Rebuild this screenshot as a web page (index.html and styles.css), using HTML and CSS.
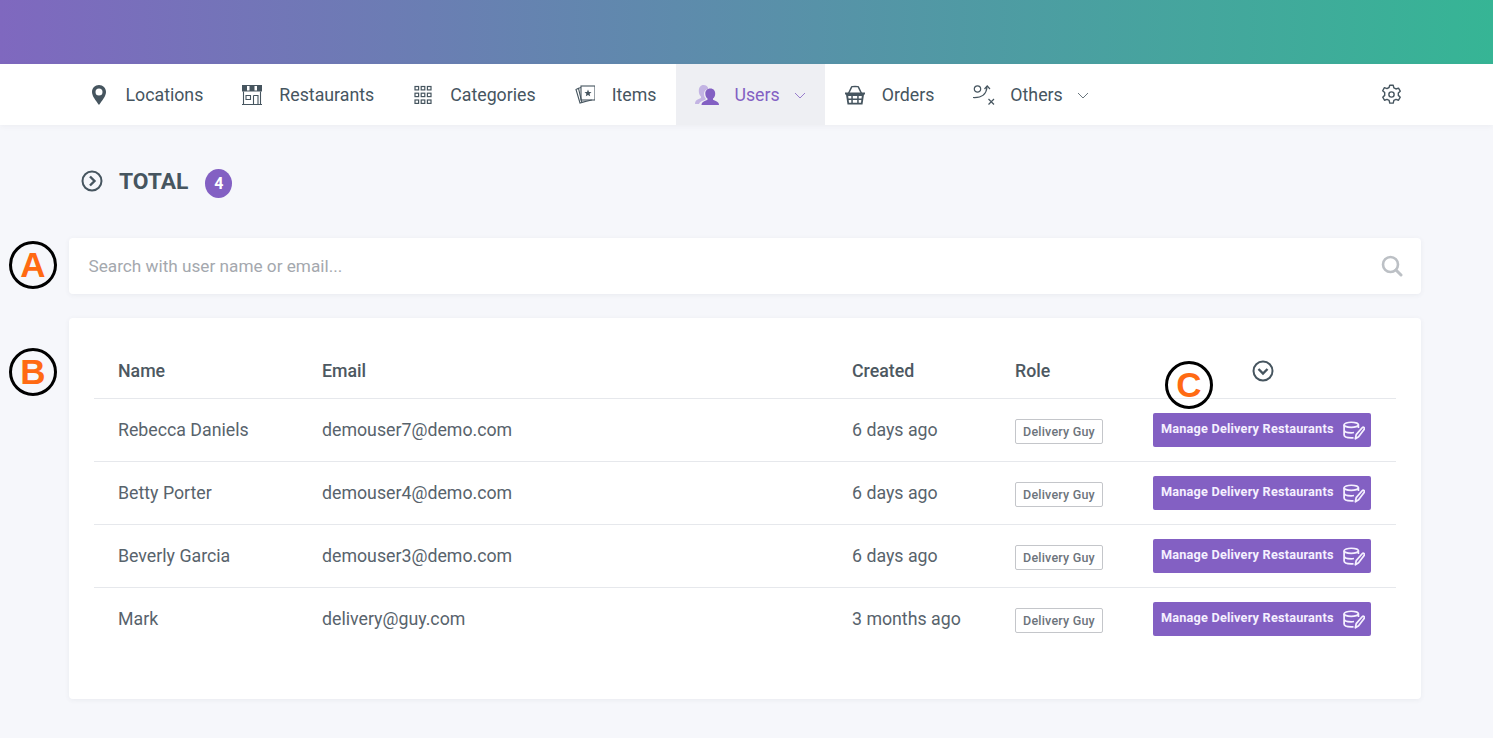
FILE: index.html
```html
<!DOCTYPE html>
<html lang="en">
<head>
<meta charset="utf-8">
<title>Users</title>
<link rel="stylesheet" href="styles.css">
</head>
<body>
<svg class="defs" width="0" height="0" aria-hidden="true">
  <symbol id="i-edit" viewBox="0 0 24 20">
    <ellipse cx="9" cy="3.800" rx="7.800" ry="2.800" fill="none" stroke="currentColor" stroke-width="1.900"/>
    <path d="M1.200 3.800V15c0 1.800 3.500 3 7.800 3h2.500M1.200 9.500c0 1.800 3.500 3 7.800 3 1 0 2-.1 3-.3M16.800 3.800v3.500" fill="none" stroke="currentColor" stroke-width="1.900"/>
    <path d="M13.500 19l.9-4.500 6.500-7.500c.7-.7 1.500-.7 2.100-.1s.6 1.400 0 2.100L17 16.800z" fill="none" stroke="currentColor" stroke-width="1.900" stroke-linejoin="round"/>
  </symbol>
</svg>

<header class="gradient-bar"></header>

<nav class="nav">
  <a class="nav-item">
    <svg class="nav-icon" viewBox="0 0 20 20"><path fill="#46555f" fill-rule="evenodd" d="M10 0C6 0 3 3.100 3 7c0 4.300 4.200 8.800 7 13 2.800-4.200 7-8.700 7-13 0-3.900-3-7-7-7zm0 3.500a3.500 3.500 0 1 1 0 7 3.500 3.500 0 0 1 0-7z"/></svg>
    <span>Locations</span>
  </a>
  <a class="nav-item">
    <svg class="nav-icon" viewBox="0 0 20 20"><path fill="#46555f" d="M0 0h20v6.500H0z"/><path fill="#fff" d="M5 1h2.500v4.500H5zM12.500 1H15v4.500h-2.500z"/><path fill="none" stroke="#46555f" stroke-width="1.100" d="M1.500 6.500V19M18.500 6.500V19M0 19.500h20M4 10.500h4.500v4H4zM11.500 10.500h4.500v9M11.500 10.500v9"/></svg>
    <span>Restaurants</span>
  </a>
  <a class="nav-item">
    <svg class="nav-icon" viewBox="0 0 20 20"><g fill="none" stroke="#46555f" stroke-width="1.200"><rect x="2" y="1.500" width="3.600" height="3.400"/><rect x="8.200" y="1.500" width="3.600" height="3.400"/><rect x="14.400" y="1.500" width="3.600" height="3.400"/><rect x="2" y="8.200" width="3.600" height="3.400"/><rect x="8.200" y="8.200" width="3.600" height="3.400"/><rect x="14.400" y="8.200" width="3.600" height="3.400"/><rect x="2" y="15" width="3.600" height="3.400"/><rect x="8.200" y="15" width="3.600" height="3.400"/><rect x="14.400" y="15" width="3.600" height="3.400"/></g></svg>
    <span>Categories</span>
  </a>
  <a class="nav-item">
    <svg class="nav-icon" viewBox="0 0 20 20"><g fill="none" stroke="#46555f" stroke-width="1.100"><rect x="6" y="1" width="14" height="14"/><path d="M6 2.500l-2.500.8 3.300 14 10-2.300M3.500 3.300L1 4.500l4 13.500 6.500-1.700"/></g><path fill="#46555f" d="M13 4.500l1 2.400 2.500.2-1.900 1.600.6 2.500-2.200-1.300-2.200 1.300.6-2.500-1.900-1.600 2.500-.2z"/></svg>
    <span>Items</span>
  </a>
  <a class="nav-item nav-item-active">
    <svg class="nav-icon" viewBox="0 0 24 20"><path fill="#c3b4e3" d="M8.500 0c2.600 0 4.500 1.600 4.800 4-2.600.2-4.300 2.200-4.300 5 0 1.700.6 3.300 1.700 4.400v1l-3.500 1.600c-1.600.7-2.700 1.600-3.200 3H0c0-2.500 1.100-4 3.200-4.800l2.800-1.200v-1.500C4.600 10.300 3.800 8.300 3.800 6 3.800 2.500 5.600 0 8.500 0z"/><path fill="#8360c3" d="M15.500 3.500c2.900 0 4.700 2.200 4.700 5.200 0 2-.8 3.800-2.200 4.900v1.200l3.300 1.500c1.800.8 2.700 2 2.700 3.700H6.500c0-1.700.9-2.900 2.700-3.700l3.300-1.500v-1.200c-1.400-1.100-2.200-2.900-2.200-4.900 0-3 1.800-5.200 5.200-5.200z"/></svg>
    <span>Users</span>
    <svg class="caret" viewBox="0 0 12 7"><path d="M1 1l5 5 5-5" fill="none" stroke="currentColor" stroke-width="1"/></svg>
  </a>
  <a class="nav-item">
    <svg class="nav-icon" viewBox="0 0 20 20"><path fill="none" stroke="#46555f" stroke-width="1.500" d="M3.500 8.500l3.300-6.800c.2-.4 6.200-.4 6.400 0l3.300 6.800"/><path fill="#46555f" fill-rule="evenodd" d="M0 7.500h20v2h-1l-1.500 10h-15L1 9.500H0zM3.200 11l.3 2.600h2.800V11zm4.600 0v2.600h4.400V11zm5.900 0v2.600h2.800l.3-2.600zM3.700 15.100l.3 2.700h2.300v-2.700zm4.100 0v2.700h4.400v-2.700zm5.900 0v2.700H16l.3-2.700z"/></svg>
    <span>Orders</span>
  </a>
  <a class="nav-item">
    <svg class="nav-icon nav-icon-wide" viewBox="0 0 22 20"><g fill="none" stroke="#46555f" stroke-width="1.200"><circle cx="4.500" cy="4" r="3.200"/><path d="M0 12.500c6 .3 13-1.500 14-10M11.500 4l2.700-3 2.800 3M15.500 14l5.500 5.500M21 14l-5.500 5.500"/></g></svg>
    <span>Others</span>
    <svg class="caret" viewBox="0 0 12 7"><path d="M1 1l5 5 5-5" fill="none" stroke="currentColor" stroke-width="1"/></svg>
  </a>
  <a class="nav-settings">
    <svg viewBox="0 0 24 24" width="21" height="21"><g fill="none" stroke="#46555f" stroke-width="1.600" stroke-linejoin="round"><circle cx="12" cy="12" r="3"/><path d="M10 1.500h4l.7 3 2.400 1.200 2.900-1 2 3.500-2.200 2.100v2.700l2.200 2.100-2 3.500-2.900-1-2.400 1.200-.7 3h-4l-.7-3-2.400-1.200-2.900 1-2-3.500 2.200-2.100V9.800L1.900 7.700l2-3.500 2.900 1 2.400-1.200z"/></g></svg>
  </a>
</nav>

<main class="page">
  <div class="page-title">
    <svg class="title-icon" viewBox="0 0 22 22"><circle cx="11" cy="11" r="9.500" fill="none" stroke="#46555f" stroke-width="2"/><path d="M9 6.500l4.500 4.500L9 15.500" fill="none" stroke="#46555f" stroke-width="2.400"/></svg>
    <h1>TOTAL</h1>
    <span class="count">4</span>
  </div>

  <div class="card search">
    <span class="search-text">Search with user name or email...</span>
    <svg class="search-icon" viewBox="0 0 22 22"><circle cx="9.500" cy="9.500" r="7.500" fill="none" stroke="#bcc0c5" stroke-width="2.600"/><path d="M15 15l5 5" stroke="#bcc0c5" stroke-width="3" stroke-linecap="round"/></svg>
  </div>

  <section class="card table-card">
    <table class="users">
      <colgroup>
        <col class="col-name"><col class="col-email"><col class="col-created"><col class="col-role"><col>
      </colgroup>
      <thead>
        <tr>
          <th>Name</th>
          <th>Email</th>
          <th>Created</th>
          <th>Role</th>
          <th class="th-toggle"><svg class="toggle-icon" viewBox="0 0 22 22"><circle cx="11" cy="11" r="9.500" fill="none" stroke="#46555f" stroke-width="2"/><path d="M6.500 9l4.500 4.500L15.500 9" fill="none" stroke="#46555f" stroke-width="2.400"/></svg></th>
        </tr>
      </thead>
      <tbody>
        <tr>
          <td>Rebecca Daniels</td><td>demouser7@demo.com</td><td>6 days ago</td>
          <td><span class="role">Delivery Guy</span></td>
          <td><a class="manage">Manage Delivery Restaurants<svg class="manage-icon"><use href="#i-edit"/></svg></a></td>
        </tr>
        <tr>
          <td>Betty Porter</td><td>demouser4@demo.com</td><td>6 days ago</td>
          <td><span class="role">Delivery Guy</span></td>
          <td><a class="manage">Manage Delivery Restaurants<svg class="manage-icon"><use href="#i-edit"/></svg></a></td>
        </tr>
        <tr>
          <td>Beverly Garcia</td><td>demouser3@demo.com</td><td>6 days ago</td>
          <td><span class="role">Delivery Guy</span></td>
          <td><a class="manage">Manage Delivery Restaurants<svg class="manage-icon"><use href="#i-edit"/></svg></a></td>
        </tr>
        <tr>
          <td>Mark</td><td>delivery@guy.com</td><td>3 months ago</td>
          <td><span class="role">Delivery Guy</span></td>
          <td><a class="manage">Manage Delivery Restaurants<svg class="manage-icon"><use href="#i-edit"/></svg></a></td>
        </tr>
      </tbody>
    </table>
  </section>
</main>

<span class="marker marker-a">A</span>
<span class="marker marker-b">B</span>
<span class="marker marker-c">C</span>
</body>
</html>
```

FILE: styles.css
```css
* { box-sizing: border-box; }

html, body {
  margin: 0;
  height: 738px;
  overflow: hidden;
}

body {
  position: relative;
  background: #f6f7fb;
  font-family: Roboto, "Liberation Sans", sans-serif;
  color: #47535c;
}

.defs { position: absolute; }

.gradient-bar {
  height: 64px;
  background: linear-gradient(to right, #7f68bf, #36b595);
}

.nav {
  display: flex;
  align-items: stretch;
  height: 61px;
  padding: 0 91px 0 69px;
  background: #fff;
  box-shadow: 0 1px 6px rgba(60, 70, 90, 0.06);
  color: #46555f;
  font-size: 17.76px;
}

.nav-item {
  display: flex;
  align-items: center;
  padding: 0 19.5px;
}

.nav-icon {
  flex: none;
  width: 20px;
  height: 20px;
  margin-right: 17px;
}

.nav-icon-wide {
  width: 22px;
  margin-right: 15px;
}

.nav-item-active {
  background: #eeeff3;
  color: #8360c3;
}

.nav-item-active .nav-icon {
  width: 24px;
  margin-right: 15px;
}

.caret {
  width: 12px;
  height: 7px;
  margin-left: 14px;
  margin-top: 2px;
  opacity: 0.8;
}

.nav-settings {
  display: flex;
  align-items: center;
  margin-left: auto;
}

.page {
  padding: 0 72px 0 69px;
}

.page-title {
  display: flex;
  align-items: center;
  height: 113px;
  padding-left: 12px;
}

.title-icon {
  width: 22px;
  height: 22px;
  margin-bottom: 2px;
}

.page-title h1 {
  margin: 0 17px 0 16px;
  font-size: 22.8px;
  font-weight: 700;
  color: #46555f;
}

.count {
  display: flex;
  align-items: center;
  justify-content: center;
  width: 27px;
  height: 29px;
  margin-top: 3px;
  border-radius: 50%;
  background: #8360c3;
  color: #fff;
  font-size: 16px;
  font-weight: 700;
}

.card {
  background: #fff;
  border-radius: 4px;
  box-shadow: 0 1px 5px rgba(60, 70, 90, 0.07);
}

.search {
  display: flex;
  align-items: center;
  justify-content: space-between;
  height: 56px;
  padding: 0 18px 0 19.5px;
}

.search-text {
  font-size: 17.2px;
  color: #a4a8ae;
}

.search-icon {
  width: 22px;
  height: 22px;
}

.table-card {
  height: 381px;
  margin-top: 24px;
  padding: 17px 25px 0;
}

.users {
  width: 100%;
  border-collapse: collapse;
  table-layout: fixed;
  font-size: 17.75px;
}

.col-name { width: 204px; }
.col-email { width: 530px; }
.col-created { width: 163px; }
.col-role { width: 138px; }

.users th {
  height: 63px;
  padding: 10px 0 0 24px;
  border-bottom: 1px solid #e6e8ec;
  font-weight: 500;
  text-align: left;
  color: #4d5861;
}

.users td {
  height: 63px;
  padding: 0 0 0 24px;
  border-bottom: 1px solid #e6e8ec;
  color: #58636c;
}

.users tbody tr:last-child td {
  border-bottom: 0;
}

.users th.th-toggle {
  padding-left: 123px;
}

.toggle-icon {
  display: block;
  width: 22px;
  height: 22px;
}

.role {
  display: inline-flex;
  align-items: center;
  justify-content: center;
  width: 88px;
  height: 25px;
  margin-top: 3px;
  border: 1px solid #c4c6ca;
  border-radius: 2px;
  font-size: 12.5px;
  font-weight: 500;
  letter-spacing: 0.2px;
  color: #6d747b;
}

.manage {
  display: flex;
  align-items: center;
  justify-content: space-between;
  width: 218px;
  height: 34px;
  padding: 0 6px 2px 8px;
  border-radius: 2px;
  background: #8360c3;
  color: #f5f0ff;
  font-size: 12.7px;
  font-weight: 700;
  letter-spacing: 0.2px;
}

.manage-icon {
  width: 22px;
  height: 19px;
  margin-top: 3px;
}

.marker {
  position: absolute;
  display: flex;
  align-items: center;
  justify-content: center;
  width: 48px;
  height: 48px;
  border: 3px solid #000;
  border-radius: 50%;
  font-family: "Liberation Sans", Arial, sans-serif;
  font-size: 35px;
  font-weight: 700;
  color: #ff6a13;
}

.marker-a { left: 9px; top: 241px; }
.marker-b { left: 9px; top: 348px; }
.marker-c { left: 1165px; top: 361px; }
```
